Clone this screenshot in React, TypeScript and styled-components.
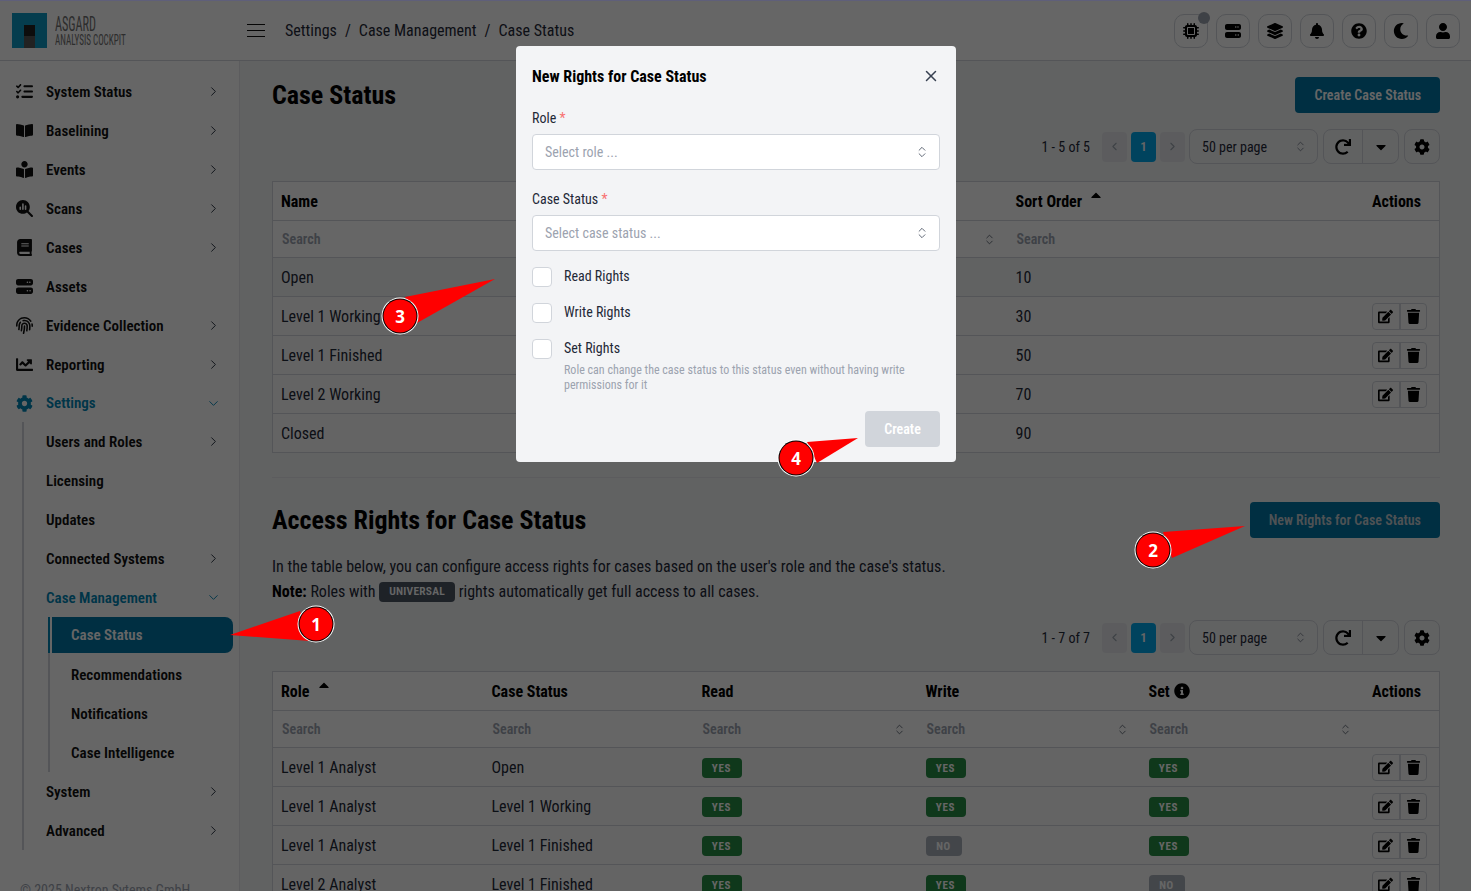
import React from "react";
import styled, { createGlobalStyle, css } from "styled-components";
import { ChevronRight, ChevronDown, ChevronLeft, ChevronsUpDown, X } from "lucide-react";
import {
  FaBell,
  FaBook,
  FaBookOpen,
  FaBookReader,
  FaCaretDown,
  FaCaretUp,
  FaChartLine,
  FaCog,
  FaEdit,
  FaFingerprint,
  FaInfoCircle,
  FaLayerGroup,
  FaMoon,
  FaQuestionCircle,
  FaRedo,
  FaTrash,
  FaUser,
} from "react-icons/fa";
import { FaListCheck, FaMagnifyingGlassChart, FaMicrochip, FaServer } from "react-icons/fa6";

const GlobalStyle = createGlobalStyle`
  html, body {
    margin: 0;
    padding: 0;
    background: #fff;
    overflow: hidden;
  }
  * { box-sizing: border-box; }
  body {
    font-family: "Roboto Condensed", Roboto, "Liberation Sans", sans-serif;
    font-stretch: 75%;
    font-size: 16px;
    color: #111827;
  }
`;

const Page = styled.div`
  position: relative;
  width: 1471px;
  height: 891px;
  overflow: hidden;
  background: #f3f4f6;
  border-top: 1px solid #5f5f7a;
`;

const Header = styled.header`
  display: flex;
  align-items: center;
  height: 60px;
  background: #fff;
  border-bottom: 1px solid #d1d5db;
`;

const LogoBox = styled.div`
  display: flex;
  align-items: center;
  gap: 8px;
  width: 247px;
  padding-left: 12px;
`;

const LogoMark = styled.div`
  position: relative;
  width: 35px;
  height: 35px;
  background: #0e9ac4;
`;

const LogoTower = styled.div`
  position: absolute;
  left: 12px;
  bottom: 0;
  width: 11px;
  height: 23px;
  background: linear-gradient(#222 0 50%, #555 50% 100%);
`;

const LogoText = styled.div`
  display: flex;
  flex-direction: column;
  color: #707070;
`;

const LogoTitle = styled.span`
  font-size: 20px;
  line-height: 18px;
  transform: scaleX(0.61);
  transform-origin: left center;
  white-space: nowrap;
`;

const LogoSub = styled.span`
  font-size: 14px;
  line-height: 14px;
  transform: scaleX(0.65);
  transform-origin: left center;
  white-space: nowrap;
`;

const Burger = styled.button`
  display: flex;
  padding: 0;
  border: 0;
  background: none;
  margin-right: 20px;
`;

const Crumbs = styled.nav`
  display: flex;
  gap: 8px;
  flex: 1;
  font-size: 16px;
  color: #1f2937;
`;

const Tools = styled.div`
  display: flex;
  gap: 8px;
  padding-right: 11px;
`;

const ToolButton = styled.button`
  position: relative;
  display: flex;
  align-items: center;
  justify-content: center;
  width: 34px;
  height: 34px;
  padding: 0;
  background: none;
  border: 1px solid #d1d5db;
  border-radius: 10px;
  color: #000;
  font-size: 16px;
`;

const Dot = styled.span`
  position: absolute;
  top: -3px;
  right: -3px;
  width: 12px;
  height: 12px;
  border-radius: 50%;
  background: #9ca3af;
`;

const Body = styled.div`
  display: flex;
`;

const Sidebar = styled.aside`
  flex: none;
  width: 240px;
  height: 830px;
  padding-top: 11px;
  background: #fff;
  border-right: 1px solid #e5e7eb;
  overflow: hidden;
`;

const NavRow = styled.div<{ $active?: boolean; $inset?: number; $short?: boolean }>`
  display: flex;
  align-items: center;
  height: ${(p) => (p.$short ? "38px" : "39px")};
  padding-left: ${(p) => p.$inset ?? 16}px;
  padding-right: 18px;
  font-size: 15px;
  font-weight: 600;
  color: ${(p) => (p.$active ? "#0085b5" : "#111")};
  svg.chev {
    margin-left: auto;
    width: 15px;
    height: 15px;
    stroke-width: 1.5;
    color: ${(p) => (p.$active ? "#0085b5" : "#1f2937")};
  }
`;

const NavIcon = styled.span`
  display: flex;
  width: 30px;
  font-size: 17px;
`;

const NavList = styled.div`
  margin-left: 22px;
  border-left: 2px solid #d1d5db;
`;

const SubList = styled.div`
  margin-left: 24px;
  border-left: 2px solid #d1d5db;
`;

const SubRow = styled.div<{ $active?: boolean }>`
  position: relative;
  display: flex;
  align-items: center;
  height: ${(p) => (p.$active ? "36px" : "39px")};
  margin-bottom: ${(p) => (p.$active ? "2px" : "0")};
  margin-left: ${(p) => (p.$active ? "2px" : "0")};
  margin-right: 6px;
  padding-left: ${(p) => (p.$active ? "19px" : "21px")};
  border-radius: 0 8px 8px 0;
  font-size: 15px;
  font-weight: 600;
  color: ${(p) => (p.$active ? "#fff" : "#111")};
  ${(p) =>
    p.$active &&
    css`
      background: #0075a5;
      &::before {
        content: "";
        position: absolute;
        left: -4px;
        top: 0;
        bottom: 0;
        width: 2px;
        background: #0085b5;
      }
    `}
`;

const Copyright = styled.div`
  margin-top: 32px;
  padding-left: 20px;
  font-size: 14px;
  color: #9ca3af;
`;

const Main = styled.main`
  flex: 1;
  padding: 16px 31px 0 32px;
`;

const TitleRow = styled.div`
  display: flex;
  align-items: center;
  justify-content: space-between;
  height: 36px;
`;

const Title = styled.h2`
  margin: 0;
  font-size: 26px;
  font-weight: 700;
  color: #000;
`;

const PrimaryButton = styled.button<{ $dim?: boolean }>`
  height: 36px;
  padding: 0 19px;
  border: 0;
  border-radius: 4px;
  background: #0075a5;
  color: ${(p) => (p.$dim ? "#c4ccd2" : "#fff")};
  font: inherit;
  font-size: 14px;
  font-weight: 600;
`;

const Toolbar = styled.div<{ $bottom: number }>`
  display: flex;
  align-items: center;
  justify-content: flex-end;
  height: 35px;
  margin-top: 16px;
  margin-bottom: ${(p) => p.$bottom}px;
`;

const Range = styled.span`
  font-size: 14px;
  margin-right: 12px;
  color: #1f2937;
`;

const PageButton = styled.span<{ $current?: boolean }>`
  display: flex;
  align-items: center;
  justify-content: center;
  width: 25px;
  height: 30px;
  margin-right: 4px;
  border-radius: 4px;
  background: ${(p) => (p.$current ? "#00a8ec" : "#e5e7eb")};
  color: ${(p) => (p.$current ? "#fff" : "#9ca3af")};
  font-size: 13px;
  font-weight: 600;
`;

const PerPage = styled.div`
  display: flex;
  align-items: center;
  justify-content: space-between;
  width: 129px;
  height: 35px;
  margin-right: 5px;
  padding: 0 10px 0 12px;
  border: 1px solid #d1d5db;
  border-radius: 8px;
  font-size: 14px;
  color: #1f2937;
`;

const Group = styled.div`
  display: flex;
  height: 35px;
  margin-right: 5px;
  border: 1px solid #d1d5db;
  border-radius: 8px;
`;

const GroupCell = styled.span<{ $w: number }>`
  display: flex;
  align-items: center;
  justify-content: center;
  width: ${(p) => p.$w}px;
  font-size: 16px;
  color: #000;
  & + & {
    border-left: 1px solid #d1d5db;
  }
`;

const GearButton = styled.span`
  display: flex;
  align-items: center;
  justify-content: center;
  width: 36px;
  height: 35px;
  border: 1px solid #d1d5db;
  border-radius: 8px;
  color: #000;
  font-size: 16px;
`;

const Table = styled.table`
  width: 1168px;
  table-layout: fixed;
  border-collapse: collapse;
  border: 1px solid #d1d5db;
  background: #fff;
  th,
  td {
    padding: 0 8px;
    border-top: 1px solid #d1d5db;
    text-align: left;
  }
`;

const HeadCell = styled.th<{ $right?: boolean }>`
  height: 39px;
  font-size: 16px;
  font-weight: 700;
  color: #000;
  ${(p) => p.$right && "text-align: right !important; padding-right: 18px !important;"}
`;

const HeadInner = styled.span`
  display: inline-flex;
  align-items: center;
  gap: 4px;
`;

const SortUp = styled(FaCaretUp)`
  margin-left: 2px;
  margin-top: -12px;
  font-size: 16px;
`;

const FilterCell = styled.td`
  height: 37px;
  font-size: 14px;
  font-weight: 600;
  color: #9ca3af;
`;

const FilterInner = styled.div`
  display: flex;
  align-items: center;
  justify-content: space-between;
  padding-left: 1px;
  padding-right: 4px;
  height: 20px;
  svg {
    width: 13px;
    height: 13px;
    margin-left: auto;
    stroke-width: 1.5;
    color: #4b5563;
  }
`;

const Row = styled.tr<{ $shade?: boolean }>`
  background: ${(p) => (p.$shade ? "#f3f4f6" : "#fbfbfb")};
`;

const Cell = styled.td<{ $right?: boolean }>`
  height: 39px;
  font-size: 16px;
  color: #1f2937;
  ${(p) => p.$right && "padding-right: 12px !important;"}
`;

const Badge = styled.span<{ $no?: boolean }>`
  display: flex;
  align-items: center;
  justify-content: center;
  width: ${(p) => (p.$no ? "36px" : "40px")};
  height: 20px;
  margin-top: 2px;
  border-radius: 4px;
  background: ${(p) => (p.$no ? "#a9afba" : "#268c44")};
  color: #fff;
  font-size: 11px;
  font-weight: 700;
  letter-spacing: 0.06em;
`;

const Actions = styled.div`
  display: flex;
  width: 55px;
  height: 27px;
  margin-left: auto;
  border: 1px solid #d1d5db;
  border-radius: 4px;
`;

const ActionCell = styled.span`
  flex: 1;
  display: flex;
  align-items: center;
  justify-content: center;
  font-size: 15px;
  color: #000;
  & + & {
    border-left: 2px solid #d1d5db;
  }
`;

const Rule = styled.hr`
  height: 1px;
  margin: 24px 0;
  border: 0;
  background: #e5e7eb;
`;

const Paragraph = styled.p`
  margin: 16px 0 0;
  font-size: 16px;
  line-height: 25px;
  color: #1f2937;
  b {
    color: #000;
  }
`;

const Universal = styled.span`
  display: inline-flex;
  align-items: center;
  height: 20px;
  padding: 0 10px;
  border-radius: 4px;
  background: #4b5563;
  color: #fff;
  font-size: 11.5px;
  font-weight: 600;
  letter-spacing: 0.02em;
  vertical-align: 2px;
`;

const Overlay = styled.div`
  position: absolute;
  inset: 0;
  display: flex;
  justify-content: center;
  align-items: flex-start;
  padding: 45px 0 0 1px;
  background: rgba(0, 0, 0, 0.6);
`;

const Modal = styled.div`
  width: 440px;
  height: 416px;
  padding: 16px;
  border-radius: 4px;
  background: #f3f4f6;
`;

const ModalHead = styled.div`
  display: flex;
  align-items: center;
  justify-content: space-between;
  height: 28px;
  margin-bottom: 16px;
  font-size: 16px;
  font-weight: 700;
  color: #000;
  svg {
    width: 18px;
    height: 18px;
    color: #374151;
  }
`;

const Label = styled.div`
  height: 24px;
  margin-bottom: 4px;
  font-size: 14px;
  line-height: 24px;
  color: #1f2937;
  i {
    font-style: normal;
    color: #f87171;
  }
`;

const SelectBox = styled.div`
  display: flex;
  align-items: center;
  justify-content: space-between;
  height: 36px;
  margin-bottom: 17px;
  padding: 0 10px 0 12px;
  border: 1px solid #d1d5db;
  border-radius: 4px;
  background: #fff;
  font-size: 14px;
  color: #9ca3af;
  svg {
    width: 14px;
    height: 14px;
    stroke-width: 1.5;
    color: #4b5563;
  }
`;

const CheckList = styled.div`
  margin-top: -1px;
`;

const CheckRow = styled.div`
  display: flex;
  align-items: flex-start;
  gap: 12px;
  height: 20px;
  margin-bottom: 16px;
  font-size: 14px;
  line-height: 18px;
  color: #1f2937;
`;

const CheckBox = styled.span`
  flex: none;
  width: 20px;
  height: 20px;
  border: 1px solid #d1d5db;
  border-radius: 4px;
  background: #fff;
`;

const Hint = styled.div`
  margin: -12px 0 18px 32px;
  width: 360px;
  font-size: 12px;
  line-height: 15px;
  color: #9ca3af;
`;

const ModalFoot = styled.div`
  display: flex;
  justify-content: flex-end;
`;

const CreateButton = styled.button`
  width: 75px;
  height: 36px;
  border: 0;
  border-radius: 4px;
  background: #d1d5db;
  color: #fff;
  font: inherit;
  font-size: 14px;
  font-weight: 600;
`;

const Annotations = styled.svg`
  position: absolute;
  left: 0;
  top: -1px;
  width: 1471px;
  height: 893px;
  pointer-events: none;
`;

const StepNumber = styled.text`
  font-family: "Open Sans", "DejaVu Sans", sans-serif;
  font-stretch: 100%;
  font-size: 17px;
  font-weight: 700;
  fill: #fff;
  text-anchor: middle;
`;

const topNav = [
  { label: "System Status", icon: <FaListCheck />, chev: true },
  { label: "Baselining", icon: <FaBookOpen />, chev: true },
  { label: "Events", icon: <FaBookReader />, chev: true },
  { label: "Scans", icon: <FaMagnifyingGlassChart />, chev: true },
  { label: "Cases", icon: <FaBook />, chev: true },
  { label: "Assets", icon: <FaServer />, chev: false },
  { label: "Evidence Collection", icon: <FaFingerprint />, chev: true },
  { label: "Reporting", icon: <FaChartLine />, chev: true },
];

const steps = [
  { n: "1", cx: 316, cy: 624, points: "230,635 300,611 310,641" },
  { n: "2", cx: 1153, cy: 550, points: "1245,526 1163,532 1172,558" },
  { n: "3", cx: 400, cy: 316, points: "495,279 405,297 417,323" },
  { n: "4", cx: 796, cy: 458, points: "858,438 807,442 817,463" },
];

const statusRows = [
  { name: "Open", order: 10, edit: false },
  { name: "Level 1 Working", order: 30, edit: true },
  { name: "Level 1 Finished", order: 50, edit: true },
  { name: "Level 2 Working", order: 70, edit: true },
  { name: "Closed", order: 90, edit: false },
];

const rightsRows = [
  { role: "Level 1 Analyst", status: "Open", read: true, write: true, set: true },
  { role: "Level 1 Analyst", status: "Level 1 Working", read: true, write: true, set: true },
  { role: "Level 1 Analyst", status: "Level 1 Finished", read: true, write: false, set: true },
  { role: "Level 2 Analyst", status: "Level 1 Finished", read: true, write: true, set: false },
];

const YesNo = ({ on }: { on: boolean }) => <Badge $no={!on}>{on ? "YES" : "NO"}</Badge>;

const RowActions = () => (
  <Actions>
    <ActionCell>
      <FaEdit />
    </ActionCell>
    <ActionCell>
      <FaTrash />
    </ActionCell>
  </Actions>
);

const TableTools = ({ range, bottom }: { range: string; bottom: number }) => (
  <Toolbar $bottom={bottom}>
    <Range>{range}</Range>
    <PageButton>
      <ChevronLeft size={13} />
    </PageButton>
    <PageButton $current>1</PageButton>
    <PageButton>
      <ChevronRight size={13} />
    </PageButton>
    <PerPage>
      50 per page
      <ChevronsUpDown size={13} strokeWidth={1.5} color="#6b7280" />
    </PerPage>
    <Group>
      <GroupCell $w={38}>
        <FaRedo />
      </GroupCell>
      <GroupCell $w={36}>
        <FaCaretDown />
      </GroupCell>
    </Group>
    <GearButton>
      <FaCog />
    </GearButton>
  </Toolbar>
);

const Filter = ({ select, hidden }: { select?: boolean; hidden?: boolean }) => (
  <FilterCell>
    <FilterInner>
      {!hidden && "Search"}
      {select && <ChevronsUpDown />}
    </FilterInner>
  </FilterCell>
);

export default function App() {
  return (
    <>
      <GlobalStyle />
      <Page>
        <Header>
          <LogoBox>
            <LogoMark>
              <LogoTower />
            </LogoMark>
            <LogoText>
              <LogoTitle>ASGARD</LogoTitle>
              <LogoSub>ANALYSIS COCKPIT</LogoSub>
            </LogoText>
          </LogoBox>
          <Burger>
            <svg width="18" height="14" viewBox="0 0 18 14">
              <path d="M0 .5h18M0 6.5h18M0 12.5h18" stroke="#111" strokeWidth="1" />
            </svg>
          </Burger>
          <Crumbs>
            <span>Settings</span>
            <span>/</span>
            <span>Case Management</span>
            <span>/</span>
            <span>Case Status</span>
          </Crumbs>
          <Tools>
            <ToolButton>
              <FaMicrochip />
              <Dot />
            </ToolButton>
            <ToolButton>
              <FaServer />
            </ToolButton>
            <ToolButton>
              <FaLayerGroup />
            </ToolButton>
            <ToolButton>
              <FaBell />
            </ToolButton>
            <ToolButton>
              <FaQuestionCircle />
            </ToolButton>
            <ToolButton>
              <FaMoon />
            </ToolButton>
            <ToolButton>
              <FaUser />
            </ToolButton>
          </Tools>
        </Header>
        <Body>
          <Sidebar>
            {topNav.map((item) => (
              <NavRow key={item.label}>
                <NavIcon>{item.icon}</NavIcon>
                {item.label}
                {item.chev && <ChevronRight className="chev" />}
              </NavRow>
            ))}
            <NavRow $active $short>
              <NavIcon>
                <FaCog />
              </NavIcon>
              Settings
              <ChevronDown className="chev" />
            </NavRow>
            <NavList>
              <NavRow $inset={22}>
                Users and Roles
                <ChevronRight className="chev" />
              </NavRow>
              <NavRow $inset={22}>Licensing</NavRow>
              <NavRow $inset={22}>Updates</NavRow>
              <NavRow $inset={22}>
                Connected Systems
                <ChevronRight className="chev" />
              </NavRow>
              <NavRow $inset={22} $active>
                Case Management
                <ChevronDown className="chev" />
              </NavRow>
              <SubList>
                <SubRow $active>Case Status</SubRow>
                <SubRow>Recommendations</SubRow>
                <SubRow>Notifications</SubRow>
                <SubRow>Case Intelligence</SubRow>
              </SubList>
              <NavRow $inset={22}>
                System
                <ChevronRight className="chev" />
              </NavRow>
              <NavRow $inset={22}>
                Advanced
                <ChevronRight className="chev" />
              </NavRow>
            </NavList>
            <Copyright>© 2025 Nextron Sytems GmbH</Copyright>
          </Sidebar>
          <Main>
            <TitleRow>
              <Title>Case Status</Title>
              <PrimaryButton>Create Case Status</PrimaryButton>
            </TitleRow>
            <TableTools range="1 - 5 of 5" bottom={17} />
            <Table>
              <colgroup>
                <col width="368" />
                <col width="367" />
                <col width="253" />
                <col />
              </colgroup>
              <thead>
                <tr>
                  <HeadCell>Name</HeadCell>
                  <HeadCell />
                  <HeadCell>
                    <HeadInner>
                      Sort Order
                      <SortUp />
                    </HeadInner>
                  </HeadCell>
                  <HeadCell $right>Actions</HeadCell>
                </tr>
                <tr>
                  <Filter />
                  <Filter select hidden />
                  <Filter />
                  <FilterCell />
                </tr>
              </thead>
              <tbody>
                {statusRows.map((row, i) => (
                  <Row key={row.name} $shade={i === 0}>
                    <Cell>{row.name}</Cell>
                    <Cell />
                    <Cell>{row.order}</Cell>
                    <Cell $right>{row.edit && <RowActions />}</Cell>
                  </Row>
                ))}
              </tbody>
            </Table>
            <Rule />
            <TitleRow>
              <Title>Access Rights for Case Status</Title>
              <PrimaryButton $dim>New Rights for Case Status</PrimaryButton>
            </TitleRow>
            <Paragraph>
              In the table below, you can configure access rights for cases based on the user's role and the case's
              status.
              <br />
              <b>Note:</b> Roles with <Universal>UNIVERSAL</Universal> rights automatically get full access to all
              cases.
            </Paragraph>
            <TableTools range="1 - 7 of 7" bottom={16} />
            <Table>
              <colgroup>
                <col width="211" />
                <col width="210" />
                <col width="224" />
                <col width="223" />
                <col width="223" />
                <col />
              </colgroup>
              <thead>
                <tr>
                  <HeadCell>
                    <HeadInner>
                      Role
                      <SortUp />
                    </HeadInner>
                  </HeadCell>
                  <HeadCell>Case Status</HeadCell>
                  <HeadCell>Read</HeadCell>
                  <HeadCell>Write</HeadCell>
                  <HeadCell>
                    <HeadInner>
                      Set
                      <FaInfoCircle />
                    </HeadInner>
                  </HeadCell>
                  <HeadCell $right>Actions</HeadCell>
                </tr>
                <tr>
                  <Filter />
                  <Filter />
                  <Filter select />
                  <Filter select />
                  <Filter select />
                  <FilterCell />
                </tr>
              </thead>
              <tbody>
                {rightsRows.map((row) => (
                  <Row key={row.role + row.status}>
                    <Cell>{row.role}</Cell>
                    <Cell>{row.status}</Cell>
                    <Cell>
                      <YesNo on={row.read} />
                    </Cell>
                    <Cell>
                      <YesNo on={row.write} />
                    </Cell>
                    <Cell>
                      <YesNo on={row.set} />
                    </Cell>
                    <Cell $right>
                      <RowActions />
                    </Cell>
                  </Row>
                ))}
              </tbody>
            </Table>
          </Main>
        </Body>
        <Overlay>
          <Modal>
            <ModalHead>
              New Rights for Case Status
              <X />
            </ModalHead>
            <Label>
              Role <i>*</i>
            </Label>
            <SelectBox>
              Select role ...
              <ChevronsUpDown />
            </SelectBox>
            <Label>
              Case Status <i>*</i>
            </Label>
            <SelectBox>
              Select case status ...
              <ChevronsUpDown />
            </SelectBox>
            <CheckList>
              <CheckRow>
                <CheckBox />
                Read Rights
              </CheckRow>
              <CheckRow>
                <CheckBox />
                Write Rights
              </CheckRow>
              <CheckRow>
                <CheckBox />
                Set Rights
              </CheckRow>
            </CheckList>
            <Hint>Role can change the case status to this status even without having write permissions for it</Hint>
            <ModalFoot>
              <CreateButton>Create</CreateButton>
            </ModalFoot>
          </Modal>
        </Overlay>
        <Annotations viewBox="0 0 1471 893">
          {steps.map((s) => (
            <g key={s.n}>
              <polygon points={s.points} fill="#ff0000" />
              <circle cx={s.cx} cy={s.cy} r="18.5" fill="#fff" />
              <circle cx={s.cx} cy={s.cy} r="17.5" fill="#000" />
              <circle cx={s.cx} cy={s.cy} r="16.5" fill="#ff0000" />
              <StepNumber x={s.cx} y={s.cy + 6.5}>
                {s.n}
              </StepNumber>
            </g>
          ))}
        </Annotations>
      </Page>
    </>
  );
}
